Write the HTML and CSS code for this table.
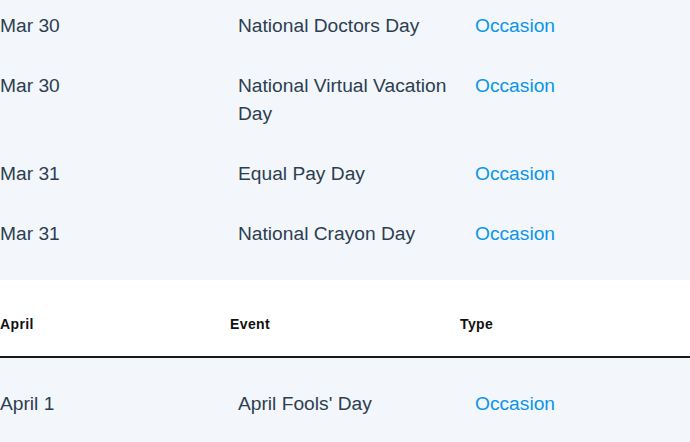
FILE: index.html
```html
<!DOCTYPE html>
<html lang="en">
<head>
<meta charset="utf-8">
<title>Events</title>
<link rel="stylesheet" href="styles.css">
</head>
<body>
<div class="page">
  <div class="tbody first">
    <div class="row"><div class="cell">Mar 30</div><div class="cell">National Doctors Day</div><div class="cell"><a class="type" href="#">Occasion</a></div></div>
    <div class="row"><div class="cell">Mar 30</div><div class="cell">National Virtual Vacation Day</div><div class="cell"><a class="type" href="#">Occasion</a></div></div>
    <div class="row"><div class="cell">Mar 31</div><div class="cell">Equal Pay Day</div><div class="cell"><a class="type" href="#">Occasion</a></div></div>
    <div class="row"><div class="cell">Mar 31</div><div class="cell">National Crayon Day</div><div class="cell"><a class="type" href="#">Occasion</a></div></div>
  </div>
  <div class="thead">
    <div class="hcell">April</div><div class="hcell">Event</div><div class="hcell">Type</div>
  </div>
  <div class="tbody">
    <div class="row"><div class="cell">April 1</div><div class="cell">April Fools' Day</div><div class="cell"><a class="type" href="#">Occasion</a></div></div>
  </div>
</div>
</body>
</html>
```
FILE: styles.css
```css
html, body {
  margin: 0;
  padding: 0;
  background: #ffffff;
}
body {
  font-family: "Liberation Sans", Arial, Helvetica, sans-serif;
  color: #2c3e50;
  overflow: hidden;
}
.page {
  width: 690px;
}
.tbody {
  background: #f3f7fb;
  padding: 16px 0;
}
.tbody.first {
  margin-top: -20px;
}
.row {
  display: grid;
  grid-template-columns: 238px 237px 1fr;
}
.thead {
  display: grid;
  grid-template-columns: 230px 230px 1fr;
  background: #ffffff;
  border-bottom: 2px solid #16181b;
}
.cell {
  font-size: 19.2px;
  line-height: 28px;
  padding: 16px 16px 16px 0;
}
.type {
  color: #0a95ea;
  text-decoration: none;
}
.hcell {
  font-size: 14px;
  font-weight: bold;
  letter-spacing: 0.4px;
  color: #111111;
  line-height: 20px;
  padding: 34px 16px 22px 0;
}
```
